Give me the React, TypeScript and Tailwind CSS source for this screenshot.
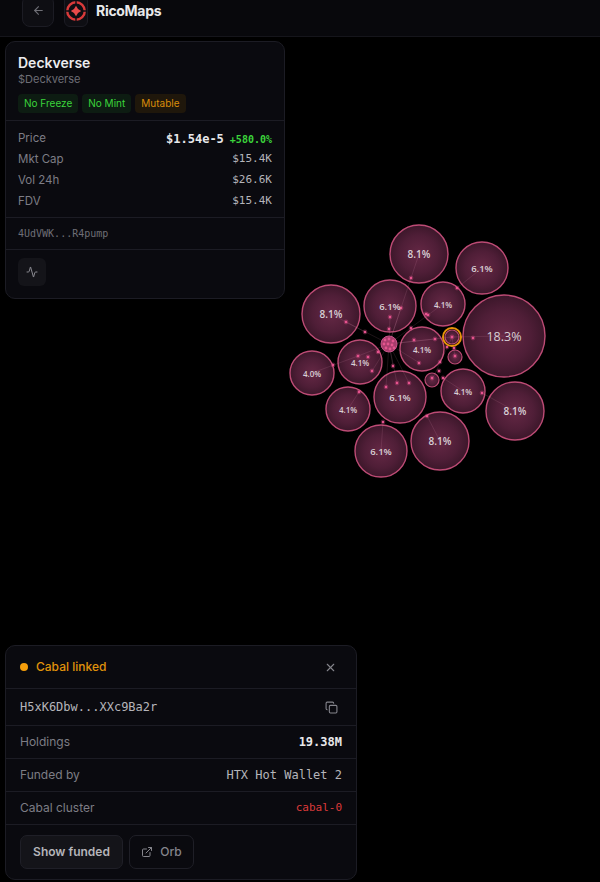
import { ArrowLeft, Activity, X, Copy, ExternalLink } from "lucide-react"

const mono = "font-['DejaVu_Sans_Mono',monospace]"

const bubbles = [
  { x: 419, y: 254, r: 29, label: "8.1%", size: 10 },
  { x: 482, y: 268, r: 26, label: "6.1%", size: 9.5 },
  { x: 443, y: 304, r: 22, label: "4.1%", size: 8 },
  { x: 390, y: 306, r: 26, label: "6.1%", size: 9.5 },
  { x: 331, y: 314, r: 29, label: "8.1%", size: 10 },
  { x: 504, y: 336, r: 41, label: "18.3%", size: 12.5 },
  { x: 422, y: 349, r: 22, label: "4.1%", size: 8 },
  { x: 360, y: 362, r: 22, label: "4.1%", size: 8 },
  { x: 312, y: 373, r: 22, label: "4.0%", size: 8 },
  { x: 400, y: 397, r: 26, label: "6.1%", size: 9.5 },
  { x: 348, y: 409, r: 22, label: "4.1%", size: 8 },
  { x: 463, y: 391, r: 22, label: "4.1%", size: 8 },
  { x: 515, y: 411, r: 29, label: "8.1%", size: 10 },
  { x: 440, y: 441, r: 29, label: "8.1%", size: 10 },
  { x: 381, y: 451, r: 26, label: "6.1%", size: 9.5 },
]

const smallBubbles = [
  { x: 452, y: 337, r: 7 },
  { x: 455, y: 357, r: 7 },
  { x: 432, y: 380, r: 7 },
]

const dots = [
  [346, 322], [365, 332], [401, 308], [390, 317], [389, 329], [411, 278], [411, 328],
  [457, 288], [428, 315], [426, 314], [473, 338], [435, 339], [452, 337], [447, 347], [454, 348],
  [333, 365], [358, 356], [368, 357], [372, 371], [378, 352], [359, 392], [393, 366],
  [386, 387], [397, 383], [409, 383], [383, 422], [455, 356], [419, 363], [440, 362],
  [439, 371], [443, 378], [432, 378], [482, 393], [427, 416], [414, 340],
]

const lines = [
  [389, 344, 346, 322], [389, 344, 411, 278], [389, 344, 401, 308], [389, 344, 390, 317],
  [389, 344, 452, 337], [389, 344, 435, 339], [389, 344, 428, 315], [389, 344, 358, 356],
  [389, 344, 372, 371], [389, 344, 386, 387], [389, 344, 397, 383], [389, 344, 409, 383],
  [389, 344, 393, 366], [389, 344, 418, 362], [331, 314, 365, 332], [419, 254, 411, 278],
  [482, 268, 457, 288], [443, 304, 428, 315], [504, 336, 452, 337], [312, 373, 358, 356],
  [348, 409, 359, 392], [381, 451, 383, 422], [515, 411, 482, 393], [440, 441, 427, 416],
  [463, 391, 443, 378], [452, 337, 432, 380], [452, 337, 455, 357], [389, 344, 378, 352],
]

const hubDots = [
  [385, 340], [389, 339], [393, 341], [384, 344], [388, 344], [392, 345], [386, 348], [390, 349], [394, 348],
]

function Graph() {
  return (
    <svg className="absolute left-0 top-0" width={600} height={882} viewBox="0 0 600 882">
      <defs>
        <radialGradient id="bubble">
          <stop offset="0%" stopColor="#652845" />
          <stop offset="65%" stopColor="#4f1e37" />
          <stop offset="100%" stopColor="#3c172a" />
        </radialGradient>
      </defs>
      {bubbles.map((b, i) => (
        <circle key={i} cx={b.x} cy={b.y} r={b.r} fill="url(#bubble)" stroke="#bd4b75" strokeWidth={1.4} />
      ))}
      {smallBubbles.map((b, i) => (
        <circle key={i} cx={b.x} cy={b.y} r={b.r} fill="url(#bubble)" stroke="#bd4b75" strokeWidth={1.2} />
      ))}
      {lines.map((l, i) => (
        <line key={i} x1={l[0]} y1={l[1]} x2={l[2]} y2={l[3]} stroke="#f3a6c4" strokeOpacity={0.12} strokeWidth={1} />
      ))}
      <circle cx={389} cy={344} r={8} fill="#a83d6c" stroke="#c9548a" strokeWidth={1} />
      {hubDots.map((d, i) => (
        <circle key={i} cx={d[0]} cy={d[1]} r={1.4} fill="#e2558d" />
      ))}
      {dots.map((d, i) => (
        <g key={i}>
          <circle cx={d[0]} cy={d[1]} r={2.4} fill="#e9508e" fillOpacity={0.3} />
          <circle cx={d[0]} cy={d[1]} r={1.2} fill="#ea5490" />
        </g>
      ))}
      <circle cx={452} cy={337} r={9} fill="none" stroke="#e8930a" strokeWidth={2} />
      {bubbles.map((b, i) => (
        <text
          key={i}
          x={b.x}
          y={b.y}
          textAnchor="middle"
          dominantBaseline="central"
          fontSize={b.size}
          fontWeight={b.size < 12 ? 600 : 500}
          fill="#d8d0d5"
          fontFamily="'Open Sans', sans-serif"
        >
          {b.label}
        </text>
      ))}
    </svg>
  )
}

function Badge({ label, tone }: { label: string; tone: "green" | "amber" }) {
  return (
    <span
      className={
        tone === "green"
          ? "flex h-[19px] items-center rounded-[4px] bg-[#0d1c12] px-[6px] text-[10px] text-[#3bd43b]"
          : "flex h-[19px] items-center rounded-[4px] bg-[#1f170b] px-[6px] text-[10px] text-[#d98c0a]"
      }
    >
      {label}
    </span>
  )
}

function StatRow({ label, value }: { label: string; value: string }) {
  return (
    <div className="flex h-[21px] items-center justify-between">
      <span className="text-[11.5px] text-[#7d7d85]">{label}</span>
      <span className={`${mono} text-[11px] text-[#b5b5ba]`}>{value}</span>
    </div>
  )
}

function TokenCard() {
  return (
    <div className="absolute left-[5px] top-[41px] h-[258px] w-[280px] rounded-[10px] border border-[#1c1c24] bg-[#0a0a0f]">
      <div className="h-[79px] border-b border-[#1c1c24] px-3 pt-[11px]">
        <div className="text-[14px] font-semibold leading-[20px] text-[#ececee]">Deckverse</div>
        <div className="text-[11px] leading-[13px] text-[#6e6e76]">$Deckverse</div>
        <div className="mt-[8px] flex gap-1">
          <Badge label="No Freeze" tone="green" />
          <Badge label="No Mint" tone="green" />
          <Badge label="Mutable" tone="amber" />
        </div>
      </div>
      <div className="h-[97px] border-b border-[#1c1c24] px-3 pt-[7px]">
        <div className="flex h-[21px] items-center justify-between">
          <span className="text-[11.5px] text-[#7d7d85]">Price</span>
          <span className="flex items-baseline gap-[6px]">
            <span className={`${mono} text-[12px] font-bold text-[#e8e8ea]`}>$1.54e-5</span>
            <span className={`${mono} text-[10px] font-semibold text-[#3bd43b]`}>+580.0%</span>
          </span>
        </div>
        <StatRow label="Mkt Cap" value="$15.4K" />
        <StatRow label="Vol 24h" value="$26.6K" />
        <StatRow label="FDV" value="$15.4K" />
      </div>
      <div className={`${mono} flex h-[32px] items-center border-b border-[#1c1c24] px-3 text-[10px] text-[#6e6e76]`}>
        4UdVWK...R4pump
      </div>
      <div className="px-3 pt-2">
        <button className="flex h-7 w-7 items-center justify-center rounded-[6px] bg-[#141419] text-[#8b8b92]">
          <Activity size={12} />
        </button>
      </div>
    </div>
  )
}

function WalletRow({ label, children }: { label: string; children: React.ReactNode }) {
  return (
    <div className="flex h-[33px] items-center justify-between border-b border-[#1c1c24] px-[14px]">
      <span className="text-[12px] text-[#7d7d85]">{label}</span>
      {children}
    </div>
  )
}

function WalletCard() {
  return (
    <div className="absolute left-[5px] top-[645px] h-[235px] w-[352px] rounded-[10px] border border-[#1c1c24] bg-[#0a0a0f]">
      <div className="flex h-[43px] items-center justify-between border-b border-[#1c1c24] px-[14px]">
        <div className="flex items-center gap-2">
          <span className="h-2 w-2 rounded-full bg-[#f59e0b]" />
          <span className="text-[12px] font-medium text-[#e0930b]">Cabal linked</span>
        </div>
        <X size={13} className="mr-[5px] text-[#85858c]" />
      </div>
      <div className="flex h-[37px] items-center justify-between border-b border-[#1c1c24] px-[14px]">
        <span className={`${mono} text-[12px] text-[#b5b5ba]`}>H5xK6Dbw...XXc9Ba2r</span>
        <Copy size={13} className="mr-[4px] text-[#85858c]" />
      </div>
      <WalletRow label="Holdings">
        <span className={`${mono} text-[12px] font-bold text-[#e8e8ea]`}>19.38M</span>
      </WalletRow>
      <WalletRow label="Funded by">
        <span className={`${mono} text-[12px] text-[#b5b5ba]`}>HTX Hot Wallet 2</span>
      </WalletRow>
      <WalletRow label="Cabal cluster">
        <span className={`${mono} text-[11px] text-[#dc3a3a]`}>cabal-0</span>
      </WalletRow>
      <div className="flex gap-[6px] px-[14px] pt-[10px]">
        <button className="h-[34px] w-[103px] rounded-[7px] border border-[#1f1f27] bg-[#141419] text-[12px] font-semibold text-[#b5b5ba]">
          Show funded
        </button>
        <button className="flex h-[34px] w-[65px] items-center justify-center gap-[7px] rounded-[7px] border border-[#1f1f27] text-[12px] font-medium text-[#85858c]">
          <ExternalLink size={12} />
          Orb
        </button>
      </div>
    </div>
  )
}

function Logo() {
  return (
    <div className="flex h-[32px] w-6 items-center justify-center rounded-[6px] border border-[#1c1c24] bg-[#0e0e13]">
      <svg width="22" height="22" viewBox="0 0 22 22" fill="none">
        <circle cx="11" cy="11" r="8.8" stroke="#d93a3a" strokeWidth="2.4" />
        <path d="M11 0.5V4.5M11 17.5V21.5M0.5 11H4.5M17.5 11H21.5" stroke="#0e0e13" strokeWidth="1.4" />
        <path d="M11 5.8L13 9L16.2 11L13 13L11 16.2L9 13L5.8 11L9 9Z" fill="#e84a4a" />
      </svg>
    </div>
  )
}

export default function App() {
  return (
    <div className="relative h-[882px] w-[600px] overflow-hidden bg-black font-['Inter',sans-serif]">
      <header className="flex h-[37px] items-start border-b border-[#15151b] bg-[#08080c] pl-[22px]">
        <div className="flex h-[21px] items-center">
          <button className="flex h-8 w-8 shrink-0 items-center justify-center rounded-[8px] border border-[#1c1c24] bg-[#0e0e13] text-[#6f6f76]">
            <ArrowLeft size={13} />
          </button>
          <div className="ml-[10px]">
            <Logo />
          </div>
          <span className="ml-2 text-[14px] font-bold tracking-[-0.3px] text-[#e8e8ea]">RicoMaps</span>
        </div>
      </header>
      <Graph />
      <TokenCard />
      <WalletCard />
    </div>
  )
}
